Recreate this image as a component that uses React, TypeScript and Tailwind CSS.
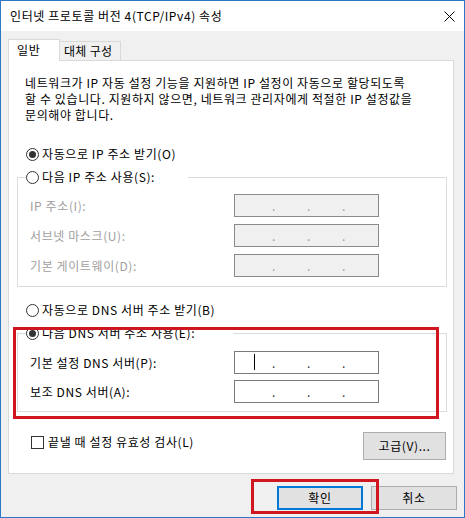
function Radio({ checked }: { checked?: boolean }) {
  return (
    <span className="w-[13px] h-[13px] rounded-full border border-[#333333] bg-white flex items-center justify-center shrink-0">
      {checked && <span className="w-[7px] h-[7px] rounded-full bg-[#333333]" />}
    </span>
  )
}

function IpBox({ disabled, cursor }: { disabled?: boolean; cursor?: boolean }) {
  return (
    <div
      className={
        disabled
          ? "relative w-[145px] h-[23px] border border-[#8a8a8a] bg-[#f0f0f0] flex items-center text-[#a0a0a0] tracking-normal"
          : "relative w-[145px] h-[23px] border border-[#7a7a7a] bg-white flex items-center text-[#333333] tracking-normal"
      }
    >
      <span className="w-[37px]" />
      <span className="w-[3px] text-center">.</span>
      <span className="w-[32px]" />
      <span className="w-[3px] text-center">.</span>
      <span className="w-[32px]" />
      <span className="w-[3px] text-center">.</span>
      {cursor && <span className="absolute left-[19px] top-[2px] h-[16px] w-px bg-black" />}
    </div>
  )
}

function Row({ label, disabled, cursor }: { label: string; disabled?: boolean; cursor?: boolean }) {
  return (
    <div className="flex items-center h-[23px]">
      <span className={disabled ? "w-[204px] text-[#a0a0a0]" : "w-[204px]"}>{label}</span>
      <IpBox disabled={disabled} cursor={cursor} />
    </div>
  )
}

export default function App() {
  return (
    <div className="w-[465px] h-[518px] border border-[#2b78c8] flex flex-col bg-[#f0f0f0] text-[12px] leading-[16px] tracking-[0.6px] text-black font-['Noto_Sans_CJK_KR','Noto_Sans',sans-serif]">
      <div className="h-[30px] bg-white flex items-center justify-between pl-[9px] pr-[9px]">
        <span>인터넷 프로토콜 버전 4(TCP/IPv4) 속성</span>
        <svg width="11" height="11" viewBox="0 0 11 11" className="mt-[1px]">
          <path d="M0.5 0.5 L10.5 10.5 M10.5 0.5 L0.5 10.5" stroke="#000" strokeWidth="1" />
        </svg>
      </div>

      <div className="flex-1 px-[7px] pt-[8px]">
        <div className="flex items-end h-[22px] -mb-px relative z-10">
          <div className="h-[22px] w-[52px] bg-white border border-b-0 border-[#d9d9d9] pl-[8px] pt-[2px]">일반</div>
          <div className="h-[20px] w-[61px] bg-[#f0f0f0] border border-l-0 border-[#d9d9d9] pl-[4px] pt-[1px] tracking-[0.3px]">대체 구성</div>
        </div>

        <div className="relative w-[446px] h-[414px] border border-[#d9d9d9] bg-white">
          <p className="pl-[16px] pt-[14px] leading-[16px] whitespace-nowrap">
            네트워크가 IP 자동 설정 기능을 지원하면 IP 설정이 자동으로 할당되도록
            <br />
            할 수 있습니다. 지원하지 않으면, 네트워크 관리자에게 적절한 IP 설정값을
            <br />
            문의해야 합니다.
          </p>

          <div className="mt-[23px] ml-[17px] h-[16px] flex items-center gap-[3px]">
            <Radio checked />
            <span>자동으로 IP 주소 받기(O)</span>
          </div>

          <fieldset className="mt-[7px] ml-[8px] w-[430px] border border-[#dcdcdc] pb-[9px]">
            <legend className="ml-[8px] w-[162px] h-[16px] flex items-center gap-[3px]">
              <Radio />
              <span>다음 IP 주소 사용(S):</span>
            </legend>
            <div className="pt-[9px] pl-[12px] flex flex-col gap-[7px]">
              <Row label="IP 주소(I):" disabled />
              <Row label="서브넷 마스크(U):" disabled />
              <Row label="기본 게이트웨이(D):" disabled />
            </div>
          </fieldset>

          <div className="mt-[15px] ml-[17px] h-[16px] flex items-center gap-[3px]">
            <Radio />
            <span>자동으로 DNS 서버 주소 받기(B)</span>
          </div>

          <fieldset className="mt-[7px] ml-[8px] w-[430px] border border-[#dcdcdc] pb-[8px]">
            <legend className="ml-[8px] w-[207px] h-[16px] flex items-center gap-[3px]">
              <Radio checked />
              <span>다음 DNS 서버 주소 사용(E):</span>
            </legend>
            <div className="pt-[10px] pl-[12px] flex flex-col gap-[6px]">
              <Row label="기본 설정 DNS 서버(P):" cursor />
              <Row label="보조 DNS 서버(A):" />
            </div>
          </fieldset>

          <div className="mt-[20px] ml-[22px] mr-[7px] flex items-start justify-between">
            <div className="mt-[2px] h-[16px] flex items-center gap-[4px]">
              <span className="w-[13px] h-[13px] border border-[#333333] bg-white" />
              <span>끝낼 때 설정 유효성 검사(L)</span>
            </div>
            <div className="w-[83px] h-[28px] bg-[#e1e1e1] border border-[#adadad] flex items-center justify-center">
              고급(V)...
            </div>
          </div>

          <span className="absolute left-[4px] top-[266px] w-[426px] h-[92px] border-[3px] border-[#d0161e]" />
        </div>

        <div className="mt-[12px] flex justify-end gap-[8px]">
          <div className="relative">
            <div className="w-[86px] h-[24px] bg-[#e1e1e1] border-2 border-[#0078d7] flex items-center justify-center">
              확인
            </div>
            <span className="absolute -left-[26px] -top-[7px] w-[128px] h-[35px] border-[3px] border-[#d0161e]" />
          </div>
          <div className="w-[86px] h-[24px] bg-[#e1e1e1] border border-[#adadad] flex items-center justify-center">
            취소
          </div>
        </div>
      </div>
    </div>
  )
}
